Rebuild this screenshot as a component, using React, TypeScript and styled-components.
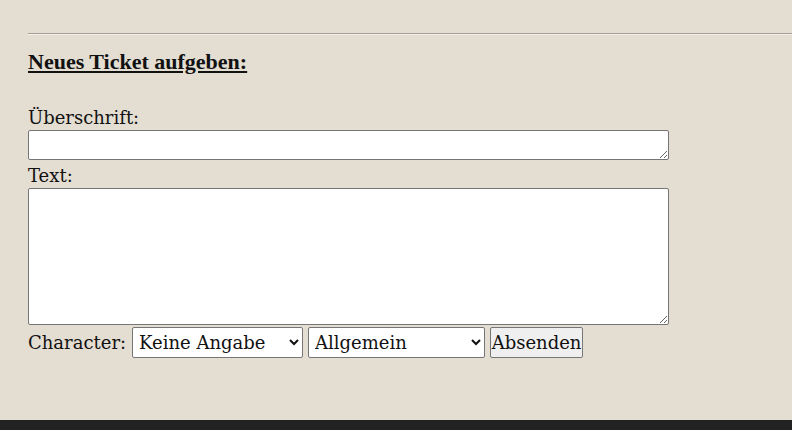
import React from "react"
import styled, { createGlobalStyle } from "styled-components"

const GlobalStyle = createGlobalStyle`
  html, body {
    margin: 0;
    padding: 0;
    background: #e3ddd2;
    overflow: hidden;
  }
  body {
    font-family: "DejaVu Serif", "Liberation Serif", serif;
    font-size: 18px;
    color: #111;
  }
`

const Page = styled.div`
  height: 430px;
  display: flex;
  flex-direction: column;
`

const Content = styled.main`
  flex: 1;
  padding: 33px 0 0 28px;
`

const Rule = styled.hr`
  margin: 0;
  border: none;
  border-top: 1px solid #a39d95;
  border-bottom: 1px solid #f4f1ec;
`

const Heading = styled.h3`
  margin: 14px 0 0;
  font-family: "Liberation Serif", "DejaVu Serif", serif;
  font-size: 22px;
  font-weight: bold;
  text-decoration: underline;
  line-height: 26px;
`

const Form = styled.form`
  margin-top: 31px;
  display: flex;
  flex-direction: column;
  align-items: flex-start;
`

const Label = styled.label`
  line-height: 24px;
`

const Area = styled.textarea<{ $h: number; $gap?: number }>`
  box-sizing: border-box;
  width: 641px;
  height: ${(p) => p.$h}px;
  margin: 0 0 ${(p) => p.$gap ?? 0}px;
  border: 1px solid #767676;
  border-radius: 2px;
  background: #fff;
  font-family: inherit;
  font-size: 16px;
`

const Row = styled.div`
  display: flex;
  align-items: center;
  margin-top: 2px;
`

const RowLabel = styled.label`
  margin-right: 6px;
`

const Select = styled.select<{ $w: number }>`
  box-sizing: border-box;
  width: ${(p) => p.$w}px;
  height: 31px;
  margin-right: 5px;
  padding: 0 2px;
  border: 1px solid #767676;
  border-radius: 2px;
  background: #fff;
  color: #111;
  font-family: inherit;
  font-size: 18px;
`

const Button = styled.button`
  box-sizing: border-box;
  width: 93px;
  height: 31px;
  padding: 0;
  border: 1px solid #767676;
  border-radius: 2px;
  background: #efefef;
  color: #111;
  font-family: inherit;
  font-size: 18px;
`

const Footer = styled.footer`
  height: 10px;
  background: #222;
`

export default function App() {
  return (
    <Page>
      <GlobalStyle />
      <Content>
        <Rule />
        <Heading>Neues Ticket aufgeben:</Heading>
        <Form>
          <Label>Überschrift:</Label>
          <Area $h={30} $gap={4} />
          <Label>Text:</Label>
          <Area $h={137} />
          <Row>
            <RowLabel>Character:</RowLabel>
            <Select $w={171}>
              <option>Keine Angabe</option>
            </Select>
            <Select $w={177}>
              <option>Allgemein</option>
            </Select>
            <Button type="button">Absenden</Button>
          </Row>
        </Form>
      </Content>
      <Footer />
    </Page>
  )
}
